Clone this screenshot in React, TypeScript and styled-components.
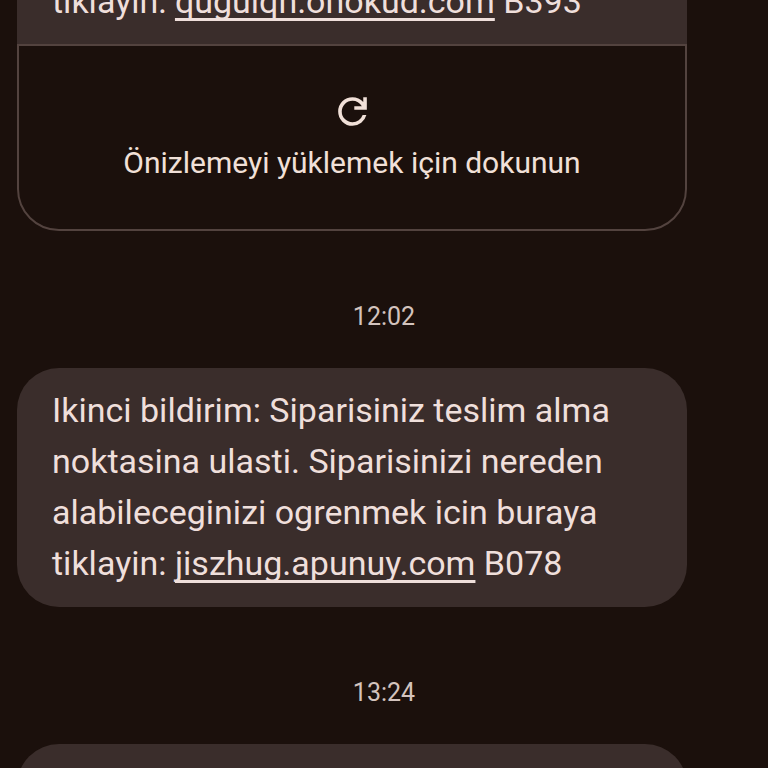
import React from "react";
import styled, { createGlobalStyle } from "styled-components";

const GlobalStyle = createGlobalStyle`
  * { box-sizing: border-box; }
  body {
    margin: 0;
    background: #1b100c;
    color: #efdfdb;
    font-family: Roboto, "Liberation Sans", sans-serif;
  }
`;

const Screen = styled.main`
  height: 100vh;
  overflow: hidden;
  background: #1b100c;
`;

/* The thread is scrolled so that its first bubble is partly out of view. */
const Thread = styled.div`
  display: flex;
  flex-direction: column;
  padding: 0 17px;
  margin-top: -41px;
`;

const Message = styled.article`
  margin-right: 64px;
`;

const Bubble = styled.div<{ $joined?: boolean }>`
  min-height: 86px;
  padding: 17px 35px 18px;
  border-radius: ${({ $joined }) => ($joined ? "42px 42px 0 0" : "42px")};
  background: #3a2d2b;
`;

const BubbleText = styled.p`
  margin: 0;
  font-size: 34px;
  line-height: 51px;
`;

const MessageLink = styled.a`
  color: inherit;
  text-decoration: underline;
  text-decoration-thickness: 3px;
  text-underline-offset: 5px;
  text-decoration-skip-ink: none;
`;

const PreviewButton = styled.button`
  display: flex;
  flex-direction: column;
  align-items: center;
  gap: 10px;
  width: 100%;
  margin: -1px 0 0;
  padding: 44px 32px 46px;
  border: 2px solid #53433f;
  border-radius: 0 0 42px 42px;
  background: transparent;
  color: #f1e0d8;
  font: inherit;
  font-size: 30px;
  line-height: 40px;
  cursor: pointer;
`;

const RefreshIcon = styled.svg`
  width: 43px;
  height: 43px;
  fill: currentColor;
`;

const Timestamp = styled.time`
  display: block;
  padding: 70px 0 35px;
  color: #d3c3be;
  font-size: 25px;
  line-height: 32px;
  text-align: center;
`;

export default function App() {
  return (
    <>
      <GlobalStyle />
      <Screen>
        <Thread>
          <Message>
            <Bubble $joined>
              <BubbleText>
                tiklayin: <MessageLink href="#">qugulqh.onokud.com</MessageLink> B393
              </BubbleText>
            </Bubble>
            <PreviewButton type="button">
              <RefreshIcon viewBox="0 0 24 24" aria-hidden="true">
                <path d="M12 20q-3.35 0-5.675-2.325T4 12t2.325-5.675T12 4q1.725 0 3.3.713T18 6.75V4h2v7h-7V9h4.2q-.8-1.4-2.187-2.2T12 6Q9.5 6 7.75 7.75T6 12t1.75 4.25T12 18q1.925 0 3.475-1.1T17.65 14h2.1q-.7 2.65-2.85 4.325T12 20" />
              </RefreshIcon>
              Önizlemeyi yüklemek için dokunun
            </PreviewButton>
          </Message>
          <Timestamp>12:02</Timestamp>
          <Message>
            <Bubble>
              <BubbleText>
                Ikinci bildirim: Siparisiniz teslim alma noktasina ulasti. Siparisinizi nereden
                alabileceginizi ogrenmek icin buraya tiklayin:{" "}
                <MessageLink href="#">jiszhug.apunuy.com</MessageLink> B078
              </BubbleText>
            </Bubble>
          </Message>
          <Timestamp>13:24</Timestamp>
          <Message>
            <Bubble />
          </Message>
        </Thread>
      </Screen>
    </>
  );
}
